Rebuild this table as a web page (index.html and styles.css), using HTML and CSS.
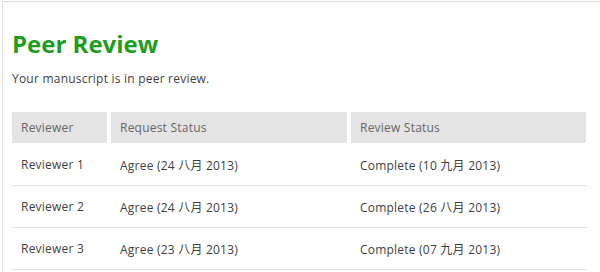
FILE: index.html
```html
<!DOCTYPE html>
<html>
<head>
<meta charset="utf-8">
<link rel="stylesheet" href="styles.css">
</head>
<body>
<div class="page">
  <h1 class="title">Peer Review</h1>
  <p class="intro">Your manuscript is in peer review.</p>
  <div class="table">
    <div class="row head">
      <div class="cell">Reviewer</div>
      <div class="cell">Request Status</div>
      <div class="cell">Review Status</div>
    </div>
    <div class="row">
      <div class="cell">Reviewer 1</div>
      <div class="cell">Agree (24 八月 2013)</div>
      <div class="cell">Complete (10 九月 2013)</div>
    </div>
    <div class="row">
      <div class="cell">Reviewer 2</div>
      <div class="cell">Agree (24 八月 2013)</div>
      <div class="cell">Complete (26 八月 2013)</div>
    </div>
    <div class="row">
      <div class="cell">Reviewer 3</div>
      <div class="cell">Agree (23 八月 2013)</div>
      <div class="cell">Complete (07 九月 2013)</div>
    </div>
  </div>
</div>
</body>
</html>
```

FILE: styles.css
```css
html, body {
  margin: 0;
  padding: 0;
  background: #fff;
}
body {
  font-family: "Open Sans", "Noto Sans CJK SC", sans-serif;
  font-size: 12px;
  color: #3f3f3f;
  letter-spacing: 0.22px;
}
.page {
  margin: 1px 0 0 2px;
  border-top: 1px solid #dcdcdc;
  border-left: 1px solid #e2e2e2;
  padding: 0 0 0 9px;
  height: 280px;
}
.title {
  margin: 0;
  padding-top: 27px;
  font-size: 24px;
  line-height: 30px;
  font-weight: bold;
  color: #1e9e1e;
  letter-spacing: 0;
}
.intro {
  margin: 11px 0 0 0;
  line-height: 18px;
}
.table {
  margin-top: 24px;
  width: 575px;
}
.row {
  display: grid;
  grid-template-columns: 95px 236px 235px;
  column-gap: 4px;
  height: 41px;
  border-bottom: 1px solid #e4e4e4;
  align-items: center;
}
.row.head {
  height: 31px;
  border-bottom: 0;
  margin-bottom: 1px;
}
.head .cell {
  background: #e4e4e4;
  color: #666;
  height: 31px;
  line-height: 31px;
}
.cell {
  padding-left: 9px;
  white-space: nowrap;
}
```
